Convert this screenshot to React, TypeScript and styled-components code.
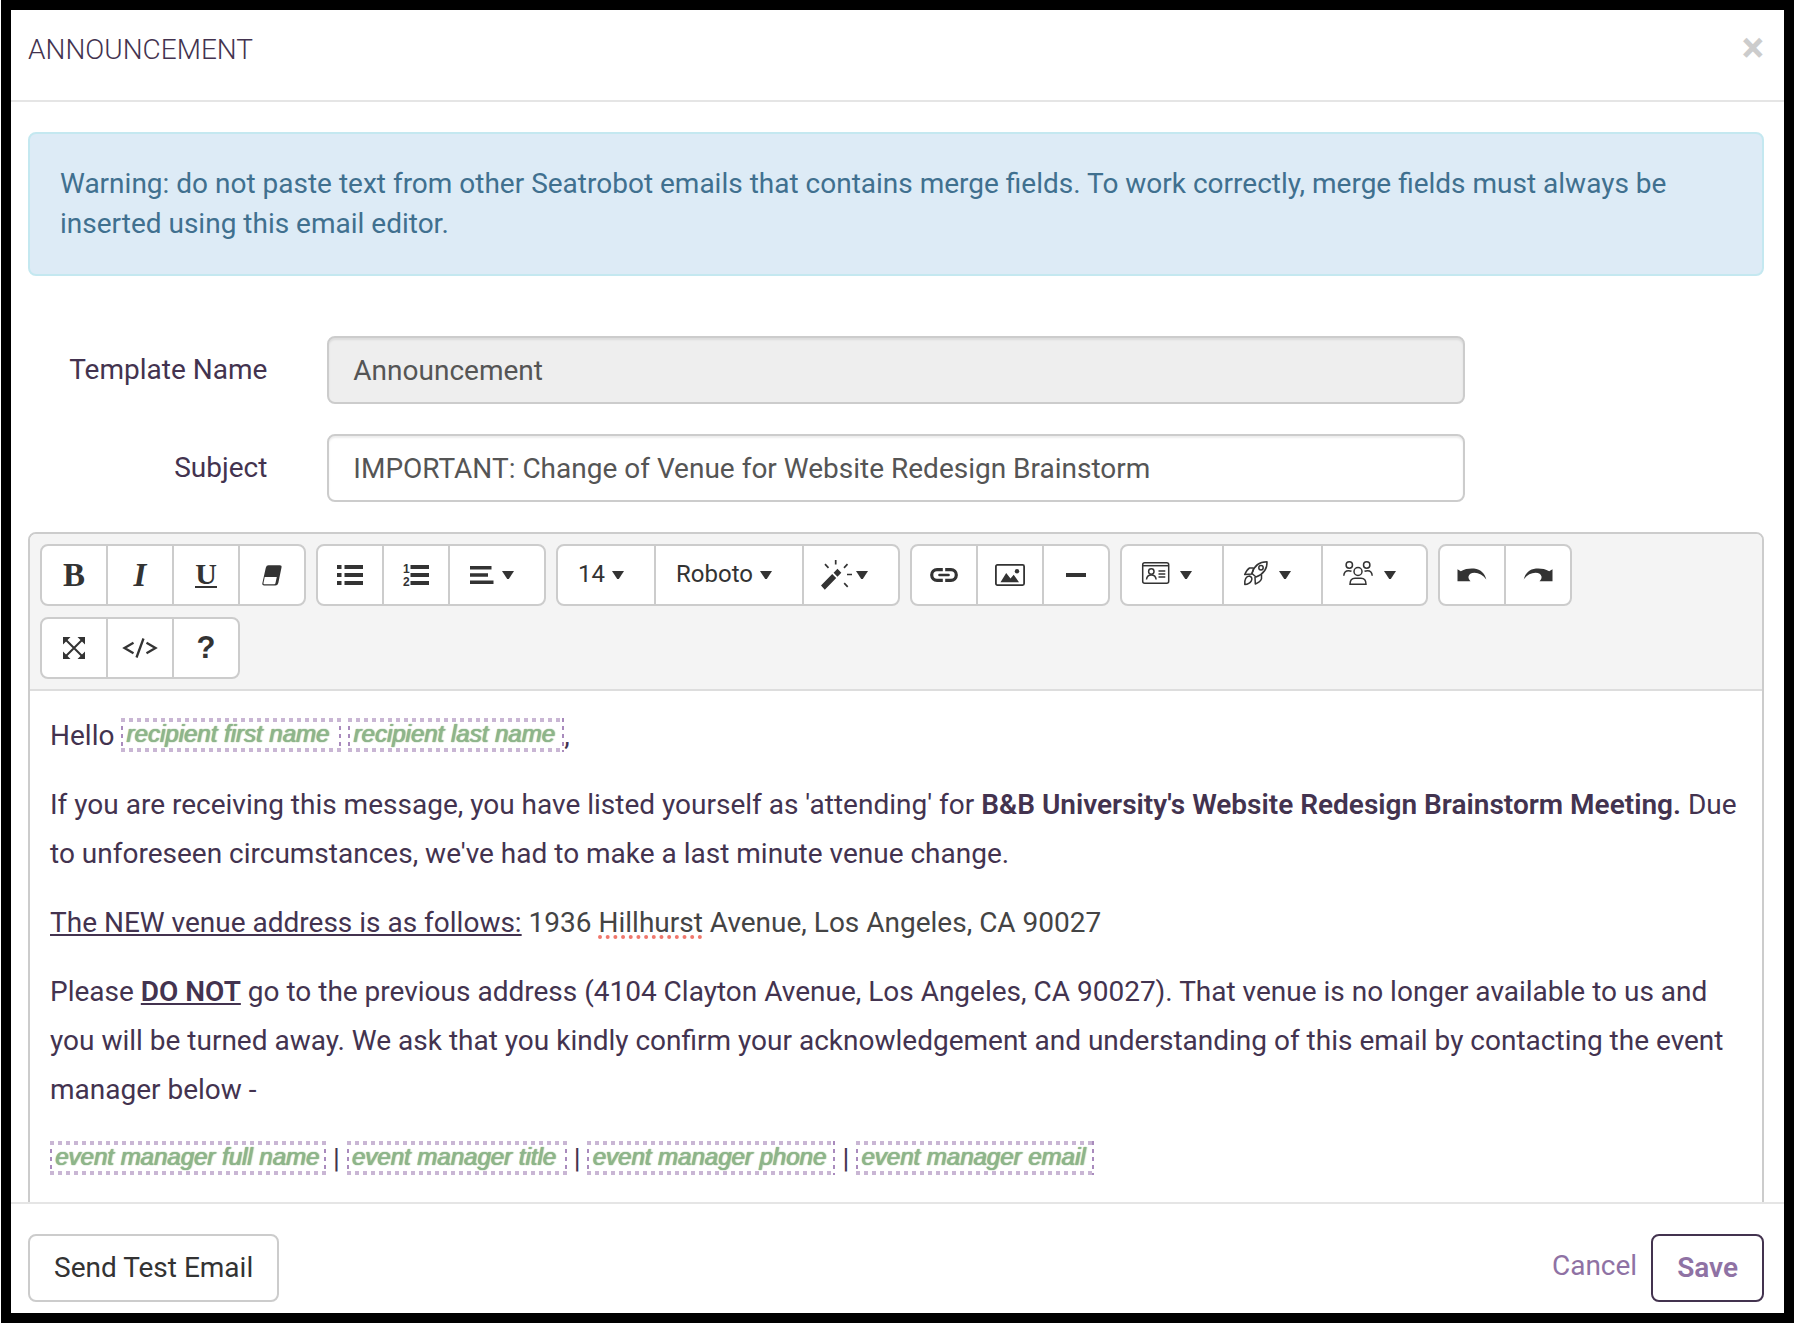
import React from "react";
import styled, { createGlobalStyle, css } from "styled-components";

const ink = "#43334f";
const glyph = "#333333";
const line = "#cccccc";
const violet = "#8f72a4";

const GlobalStyle = createGlobalStyle`
  *, *::before, *::after { box-sizing: border-box; }
  body {
    margin: 0;
    background: #ffffff;
    color: ${ink};
    font-family: Roboto, "Liberation Sans", sans-serif;
    font-size: 28px;
    line-height: 40px;
  }
  button, input, select { font: inherit; color: inherit; margin: 0; }
`;

const Modal = styled.section`
  display: flex;
  flex-direction: column;
  height: calc(100vh - 7px);
  margin: 0 0 7px 1px;
  border: 10px solid #000000;
  background: #ffffff;
  overflow: hidden;
`;

const Header = styled.header`
  display: flex;
  flex: none;
  align-items: flex-start;
  justify-content: space-between;
  padding: 18px 20px 30px 17px;
  border-bottom: 2px solid #e5e5e5;
`;

const Title = styled.h1`
  margin: 0;
  padding-top: 2px;
  font-size: 28px;
  line-height: 40px;
  font-weight: 300;
  text-transform: uppercase;
`;

const CloseButton = styled.button`
  padding: 0;
  border: 0;
  background: none;
  color: ${line};
  font-size: 42px;
  line-height: 40px;
  font-weight: 700;
  cursor: pointer;
`;

const Body = styled.div`
  flex: 1;
  min-height: 0;
  padding: 30px 20px 0 17px;
  overflow: hidden;
`;

const Alert = styled.div`
  padding: 30px;
  border: 2px solid #c4e8f0;
  border-radius: 8px;
  background: #ddebf6;
  color: #40708f;
`;

const Form = styled.form`
  display: grid;
  gap: 30px;
  margin: 60px -30px 30px;
`;

const FormRow = styled.div`
  display: grid;
  grid-template-columns: 2fr 8fr 2fr;
`;

const FieldLabel = styled.label`
  padding: 14px 30px 14px 0;
  text-align: right;
`;

const FieldCell = styled.div`
  padding: 0 30px;
`;

const TextField = styled.input`
  display: block;
  width: 100%;
  height: 68px;
  padding: 0 24px;
  border: 2px solid ${line};
  border-radius: 8px;
  background: #ffffff;
  color: #555555;
  box-shadow: inset 0 2px 2px rgba(0, 0, 0, 0.08);
  &:read-only { background: #eeeeee; }
`;

const Editor = styled.div`
  border: 2px solid ${line};
  border-radius: 8px;
`;

const Toolbar = styled.div`
  display: flex;
  flex-wrap: wrap;
  gap: 11px 10px;
  padding: 10px;
  border-bottom: 2px solid #dddddd;
  border-radius: 6px 6px 0 0;
  background: #f4f4f4;
`;

const Group = styled.div`
  display: flex;
  height: 62px;
  border: 2px solid ${line};
  border-radius: 8px;
  background: #ffffff;
  && > * + * { border-left: 2px solid ${line}; }
`;

const toolBase = css`
  display: flex;
  align-items: center;
  background: none;
  color: ${glyph};
  font-size: 24px;
  line-height: 34px;
`;

const Tool = styled.button`
  ${toolBase}
  justify-content: center;
  width: 66px;
  padding: 0;
  border: 0;
  &:first-child { width: 64px; }
`;

const MenuTool = styled.button<{ $gap: number }>`
  ${toolBase}
  gap: ${(p) => p.$gap}px;
  padding: 0 30px 0 20px;
  border: 0;
`;

const PickerTool = styled.label`
  ${toolBase}
  gap: 7px;
  padding: 0 30px 0 20px;
`;

const Picker = styled.select`
  appearance: none;
  field-sizing: content;
  padding: 0 0 2px;
  border: 0;
  background: none;
  outline: none;
`;

const Letter = styled.span<{ $italic?: boolean }>`
  font-family: "Liberation Serif", serif;
  font-size: 33px;
  font-weight: 700;
  font-style: ${(p) => (p.$italic ? "italic" : "normal")};
`;

const UnderLetter = styled.span`
  border-bottom: 2px solid ${glyph};
  font-family: "Liberation Serif", serif;
  font-size: 30px;
  line-height: 24px;
  font-weight: 700;
`;

const QuestionMark = styled.span`
  font-family: "Liberation Sans", sans-serif;
  font-size: 31px;
  font-weight: 700;
`;

const Icon = styled.svg`
  display: block;
  flex: none;
  overflow: visible;
`;

const Content = styled.div`
  padding: 20px 20px 60px;
  line-height: 49px;
  outline: none;
  p { margin: 0 0 20px; }
  b { font-weight: 600; }
`;

const Address = styled.span`
  color: #444444;
`;

const Misspelled = styled.span`
  text-decoration: underline dotted #f0776c 4px;
  text-underline-offset: 3px;
  text-decoration-skip-ink: none;
`;

const MergeField = styled.span<{ $width: number }>`
  display: inline-block;
  width: ${(p) => p.$width}px;
  height: 34px;
  margin-bottom: 6px;
  padding-left: 5px;
  vertical-align: middle;
  color: #8db58b;
  font-family: "Liberation Sans", sans-serif;
  font-size: 24px;
  line-height: 32px;
  font-style: italic;
  text-shadow: 0 0 1px #8db58b, 1px 0 1px #8db58b;
  white-space: nowrap;
  background:
    repeating-linear-gradient(90deg, #c9b6d4 0 4px, transparent 4px 8px) top / 100% 4px no-repeat,
    repeating-linear-gradient(90deg, #c9b6d4 0 4px, transparent 4px 8px) bottom / 100% 4px no-repeat,
    repeating-linear-gradient(180deg, #a98bbd 0 4px, transparent 4px 8px) left / 2px 100% no-repeat,
    repeating-linear-gradient(180deg, #a98bbd 0 4px, transparent 4px 8px) right / 2px 100% no-repeat;
`;

const Footer = styled.footer`
  display: flex;
  flex: none;
  align-items: center;
  gap: 14px;
  padding: 30px 20px 11px 17px;
  border-top: 2px solid #e5e5e5;
`;

const FooterButton = styled.button<{ $primary?: boolean }>`
  height: 68px;
  padding: 0 24px;
  border: 2px solid ${(p) => (p.$primary ? ink : line)};
  border-radius: 8px;
  background: #ffffff;
  color: ${(p) => (p.$primary ? violet : glyph)};
  font-weight: ${(p) => (p.$primary ? 600 : 400)};
`;

const CancelLink = styled.a`
  margin-left: auto;
  padding-bottom: 4px;
  color: ${violet};
  text-decoration: none;
`;

const Caret = () => (
  <Icon width="12" height="8" viewBox="0 0 12 8" aria-hidden="true">
    <path d="M0 0h12L6.800 8h-1.600z" fill={glyph} />
  </Icon>
);

const EraserIcon = () => (
  <Icon width="20" height="21" viewBox="0 0 20 21">
    <path d="M6.500.3h11.200q2.300 0 1.800 2.300L16.300 18q-.6 2.500-3 2.500H2.200q-2.400 0-1.800-2.400L3.800 2.700Q4.400.3 6.500.3z" fill={glyph} />
    <path d="M2.700 12h12.100L13.500 18q-.3 1.200-1.200 1.200H2.200q-.9 0-.7-1.200z" fill="#ffffff" />
  </Icon>
);

const BulletsIcon = () => (
  <Icon width="26" height="20" viewBox="0 0 26 20">
    <path d="M0 0h4.500v4H0zM0 8h4.500v4H0zM0 16h4.500v4H0zM7.500 0H26v4H7.500zM7.500 8H26v4H7.500zM7.500 16H26v4H7.500z" fill={glyph} />
  </Icon>
);

const NumbersIcon = () => (
  <Icon width="26" height="20" viewBox="0 0 26 20">
    <path d="M7.500 0H26v4H7.500zM7.500 8H26v4H7.500zM7.500 16H26v4H7.500z" fill={glyph} />
    <g fill={glyph} fontFamily="Liberation Sans, sans-serif" fontSize="12" fontWeight="700">
      <text x="0" y="8">1</text>
      <text x="0" y="21">2</text>
    </g>
  </Icon>
);

const AlignIcon = () => (
  <Icon width="24" height="18" viewBox="0 0 24 18">
    <path d="M0 0h21.500v3.500H0zM0 7.300h18v3.500H0zM0 14.500h23.500V18H0z" fill={glyph} />
  </Icon>
);

const WandIcon = () => (
  <Icon width="28" height="30" viewBox="3 0 28 30">
    <path d="M0 25.500 11.200 14l4 4L3.800 29.700zM12.600 12.700 16.500 8.800l3.800 4-3.800 4z" fill={glyph} />
    <path d="M14.700 0v4.500M4 4.200l3.500 3.600M26.500 4.200l-3.500 3.600M26 14.500h5M23.200 23.200l3.500 3.600" stroke={glyph} strokeWidth="1.700" fill="none" />
  </Icon>
);

const LinkIcon = () => (
  <Icon width="28" height="14" viewBox="0 0 28 14">
    <path d="M12.800 1.700H7a5.300 5.300 0 0 0 0 10.600h5.800M15.200 1.700H21a5.300 5.300 0 0 1 0 10.600h-5.800" fill="none" stroke={glyph} strokeWidth="3.200" />
    <path d="M9.500 7h9" stroke={glyph} strokeWidth="2.600" strokeLinecap="round" />
  </Icon>
);

const PictureIcon = () => (
  <Icon width="30" height="22" viewBox="0 0 30 22">
    <rect x=".9" y=".9" width="28.200" height="20.200" rx="1.500" fill="none" stroke={glyph} strokeWidth="1.800" />
    <path d="M5.500 18.200 11.200 9l4.300 5.500 3.200-3.700 5.300 7.400z" fill={glyph} />
    <circle cx="22" cy="7.200" r="2.200" fill={glyph} />
  </Icon>
);

const RuleIcon = () => (
  <Icon width="20" height="4" viewBox="0 0 20 4">
    <path d="M0 0h20v4H0z" fill={glyph} />
  </Icon>
);

const CardIcon = () => (
  <Icon width="28" height="26" viewBox="0 0 28 26" fill="none" stroke={glyph} strokeWidth="1.500">
    <rect x=".7" y=".7" width="26" height="20.500" rx="2" />
    <path d="M1 3.700h25.500" />
    <circle cx="9.300" cy="9.500" r="2.700" />
    <path d="M4.500 17.500c.3-3.800 2.500-4.500 4.800-4.500s4.500.7 4.800 4.500M16.500 9H23.300M16.500 12H23.300M16.500 15H23.300" />
  </Icon>
);

const RocketIcon = () => (
  <Icon width="24" height="28" viewBox="0 0 24 28" fill="none" stroke={glyph} strokeWidth="1.500" strokeLinejoin="round">
    <path d="M8 12.500C10 5 14 .8 23 .8c.4 7.500-4.500 12.700-11 15.200z" />
    <circle cx="17" cy="6.700" r="2.200" />
    <path d="M9.700 7H5.500Q3 8.500.7 13.500L8 13M17.500 13.500v4.200q-1.200 3.300-6.200 5.300L11 16M10 6.800 7.500 13.500M.8 23.500c-.5-5 1.400-8.500 4.700-8.500 5 2 1.500 8-4.700 8.500z" />
  </Icon>
);

const PeopleIcon = () => (
  <Icon width="30" height="28" viewBox="0 0 30 28" fill="none" stroke={glyph} strokeWidth="1.500">
    <circle cx="6.300" cy="4" r="3.200" />
    <circle cx="23.700" cy="4" r="3.200" />
    <circle cx="15" cy="10.500" r="4" />
    <path d="M.8 14.800C1 11 3.500 9.700 5.500 9.700q1.500 0 3 .5M29.200 14.800c-.2-3.800-2.700-5.100-4.700-5.100q-1.500 0-3 .5M7 23.300c0-3.800 2-6 5-6h6c3 0 5 2.200 5 6z" />
  </Icon>
);

const UndoIcon = ({ flip }: { flip?: boolean }) => (
  <Icon width="30" height="14" viewBox="0 0 30 14">
    <path
      transform={flip ? "matrix(-1 0 0 1 30 0)" : undefined}
      d="M.5 1.200 3.800 3.300C8 .7 12.500.2 17 .5 24 1.200 28 6 29.300 11.500 26 7 22 4.800 17.500 4.800c-3.500 0-5.500 1.700-6 3.700-.3 1.700.5 3 2 4.800H.5z"
      fill={glyph}
    />
  </Icon>
);

const ExpandIcon = () => (
  <Icon width="22" height="22" viewBox="0 0 22 22">
    <path d="M2 2l18 18M20 2 2 20" stroke={glyph} strokeWidth="2" />
    <path d="M0 0h7.500L0 7.500zM22 0v7.500L14.500 0zM0 22v-7.500L7.500 22zM22 22h-7.500l7.500-7.500z" fill={glyph} />
  </Icon>
);

const CodeIcon = () => (
  <Icon width="34" height="20" viewBox="0 0 34 20" fill="none" stroke={glyph} strokeWidth="2.300">
    <path d="M10.500 4.800 1.500 10l9 5.200M23.500 4.800l9 5.200-9 5.200M20.500.5l-7 19" />
  </Icon>
);

export default function App() {
  return (
    <>
      <GlobalStyle />
      <Modal role="dialog" aria-labelledby="dialog-title">
        <Header>
          <Title id="dialog-title">Announcement</Title>
          <CloseButton type="button" aria-label="Close">×</CloseButton>
        </Header>
        <Body>
          <Alert role="alert">
            Warning: do not paste text from other Seatrobot emails that contains merge fields. To work correctly, merge
            fields must always be inserted using this email editor.
          </Alert>
          <Form>
            <FormRow>
              <FieldLabel htmlFor="template-name">Template Name</FieldLabel>
              <FieldCell>
                <TextField id="template-name" defaultValue="Announcement" readOnly />
              </FieldCell>
            </FormRow>
            <FormRow>
              <FieldLabel htmlFor="subject">Subject</FieldLabel>
              <FieldCell>
                <TextField id="subject" defaultValue="IMPORTANT: Change of Venue for Website Redesign Brainstorm" />
              </FieldCell>
            </FormRow>
          </Form>
          <Editor>
            <Toolbar role="toolbar" aria-label="Formatting">
              <Group>
                <Tool type="button" aria-label="Bold"><Letter>B</Letter></Tool>
                <Tool type="button" aria-label="Italic"><Letter $italic>I</Letter></Tool>
                <Tool type="button" aria-label="Underline"><UnderLetter>U</UnderLetter></Tool>
                <Tool type="button" aria-label="Clear formatting"><EraserIcon /></Tool>
              </Group>
              <Group>
                <Tool type="button" aria-label="Bulleted list"><BulletsIcon /></Tool>
                <Tool type="button" aria-label="Numbered list"><NumbersIcon /></Tool>
                <MenuTool type="button" $gap={8} aria-label="Paragraph" aria-haspopup="menu"><AlignIcon /><Caret /></MenuTool>
              </Group>
              <Group>
                <PickerTool>
                  <Picker aria-label="Font size" defaultValue="14">
                    <option>12</option>
                    <option>14</option>
                    <option>18</option>
                  </Picker>
                  <Caret />
                </PickerTool>
                <PickerTool>
                  <Picker aria-label="Font family" defaultValue="Roboto">
                    <option>Arial</option>
                    <option>Roboto</option>
                  </Picker>
                  <Caret />
                </PickerTool>
                <MenuTool type="button" $gap={4} aria-label="Style" aria-haspopup="menu"><WandIcon /><Caret /></MenuTool>
              </Group>
              <Group>
                <Tool type="button" aria-label="Link"><LinkIcon /></Tool>
                <Tool type="button" aria-label="Picture"><PictureIcon /></Tool>
                <Tool type="button" aria-label="Horizontal rule"><RuleIcon /></Tool>
              </Group>
              <Group>
                <MenuTool type="button" $gap={10} aria-label="Contact fields" aria-haspopup="menu"><CardIcon /><Caret /></MenuTool>
                <MenuTool type="button" $gap={11} aria-label="Event fields" aria-haspopup="menu"><RocketIcon /><Caret /></MenuTool>
                <MenuTool type="button" $gap={11} aria-label="Manager fields" aria-haspopup="menu"><PeopleIcon /><Caret /></MenuTool>
              </Group>
              <Group>
                <Tool type="button" aria-label="Undo"><UndoIcon /></Tool>
                <Tool type="button" aria-label="Redo"><UndoIcon flip /></Tool>
              </Group>
              <Group>
                <Tool type="button" aria-label="Full screen"><ExpandIcon /></Tool>
                <Tool type="button" aria-label="Code view"><CodeIcon /></Tool>
                <Tool type="button" aria-label="Help"><QuestionMark>?</QuestionMark></Tool>
              </Group>
            </Toolbar>
            <Content
              contentEditable
              suppressContentEditableWarning
              spellCheck={false}
              role="textbox"
              aria-multiline="true"
              aria-label="Email body"
            >
              <p>
                Hello <MergeField $width={220}>recipient first name</MergeField>{" "}
                <MergeField $width={216}>recipient last name</MergeField>,
              </p>
              <p>
                If you are receiving this message, you have listed yourself as 'attending' for{" "}
                <b>B&amp;B University's Website Redesign Brainstorm Meeting.</b> Due to unforeseen circumstances, we've
                had to make a last minute venue change.
              </p>
              <p>
                <u>The NEW venue address is as follows:</u>{" "}
                <Address>
                  1936 <Misspelled>Hillhurst</Misspelled> Avenue, Los Angeles, CA 90027
                </Address>
              </p>
              <p>
                Please <b><u>DO NOT</u></b> go to the previous address (4104 Clayton Avenue, Los Angeles, CA 90027).
                That venue is no longer available to us and you will be turned away. We ask that you kindly confirm your
                acknowledgement and understanding of this email by contacting the event manager below -
              </p>
              <p>
                <MergeField $width={276}>event manager full name</MergeField> |{" "}
                <MergeField $width={220}>event manager title</MergeField> |{" "}
                <MergeField $width={248}>event manager phone</MergeField> |{" "}
                <MergeField $width={238}>event manager email</MergeField>
              </p>
            </Content>
          </Editor>
        </Body>
        <Footer>
          <FooterButton type="button">Send Test Email</FooterButton>
          <CancelLink href="#cancel">Cancel</CancelLink>
          <FooterButton type="button" $primary>Save</FooterButton>
        </Footer>
      </Modal>
    </>
  );
}
